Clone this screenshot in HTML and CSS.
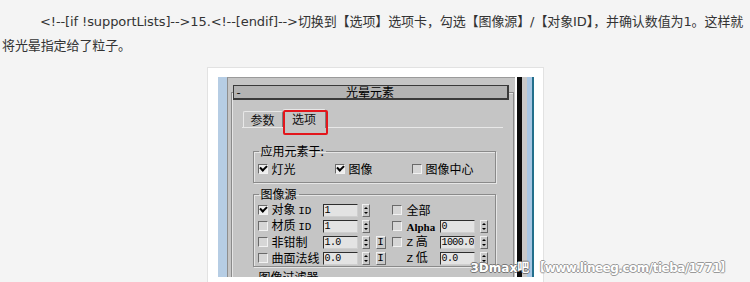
FILE: index.html
```html
<!DOCTYPE html>
<html lang="zh-CN">
<head>
  <meta charset="UTF-8">
  <title>光晕元素</title>
  <link rel="stylesheet" href="styles.css">
</head>
<body>
  <p class="step">&lt;!--[if !supportLists]--&gt;15.&lt;!--[endif]--&gt;切换到【选项】选项卡，勾选【图像源】/【对象ID】，并确认数值为1。这样就将光晕指定给了粒子。</p>

  <div class="figure">
    <div class="shot">
      <div class="edge-left"></div>
      <div class="panel">
        <div class="rollout">
          <div class="rollout-title"><span class="minus">-</span><span>光晕元素</span><span></span></div>

          <div class="tabs">
            <div class="tab">参数</div>
            <div class="tab active">选项<span class="mark"></span></div>
          </div>

          <fieldset class="group">
            <legend>应用元素于:</legend>
            <div class="apply-row">
              <label class="check"><span class="box on"></span>灯光</label>
              <label class="check"><span class="box on"></span>图像</label>
              <label class="check"><span class="box"></span>图像中心</label>
            </div>
          </fieldset>

          <fieldset class="group">
            <legend>图像源</legend>
            <div class="source-grid">
              <span class="box on"></span><span class="lbl">对象 <b class="mono">ID</b></span><span class="field">1</span><span class="spin"></span><span></span>
              <span class="box"></span><span class="lbl">全部</span><span></span><span></span>

              <span class="box"></span><span class="lbl">材质 <b class="mono">ID</b></span><span class="field">1</span><span class="spin"></span><span></span>
              <span class="box"></span><span class="lbl"><b class="serif">Alpha</b></span><span class="field">0</span><span class="spin"></span>

              <span class="box"></span><span class="lbl">非钳制</span><span class="field">1.0</span><span class="spin"></span><span class="btn-i">I</span>
              <span class="box"></span><span class="lbl"><b class="mono">Z</b> 高</span><span class="field">1000.0</span><span class="spin"></span>

              <span class="box"></span><span class="lbl">曲面法线</span><span class="field">0.0</span><span class="spin"></span><span class="btn-i">I</span>
              <span></span><span class="lbl"><b class="mono">Z</b> 低</span><span class="field">0.0</span><span class="spin"></span>
            </div>
          </fieldset>

          <div class="next-group">图像过滤器</div>
        </div>
      </div>
      <div class="edge-dark"></div>
      <div class="edge-gray"></div>
      <div class="edge-blue"></div>
      <div class="edge-teal"></div>
    </div>

    <div class="watermark"><span class="wm-site">3Dmax吧</span><span class="wm-url">【www.lineeg.com/tieba/1771】</span></div>
  </div>
</body>
</html>
```

FILE: styles.css
```css
body {
  margin: 0;
  background: #f4f4f4;
  font-family: "DejaVu Sans", "Noto Sans CJK SC", sans-serif;
  color: #333;
}

.step {
  margin: 0;
  height: 67px;
  box-sizing: border-box;
  padding: 10px 2px 0 2px;
  font-size: 13px;
  line-height: 24px;
  letter-spacing: -0.1px;
  text-indent: 38px;
}

.figure {
  position: relative;
  width: 316px;
  margin: 0 auto;
  padding: 9px 9px 9px 10px;
  border: 1px solid #e2e2e2;
  background: #fff;
}

.shot {
  display: flex;
  height: 200px;
  overflow: hidden;
  font-family: "Noto Sans CJK SC", sans-serif;
  font-size: 12px;
  line-height: 14px;
  color: #000;
}

.edge-left {
  flex: none;
  width: 9px;
  background: #b6cde4;
}

.panel {
  flex: none;
  width: 288px;
  box-sizing: border-box;
  padding: 14px 1px 0 3px;
  background: #c5c5c5;
  border-left: 1px solid #8e8e8e;
  border-top: 1px solid #9a9a9a;
}

.edge-dark { flex: none; width: 5px; margin-left: 2px; background: #0c0c0c; }
.edge-gray { flex: none; width: 5px; background: #c9c9c9; }
.edge-blue { flex: none; width: 5px; background: #a9c7e4; }
.edge-teal { flex: none; width: 2px; background: #236f8c; }

.rollout {
  border: 1px solid #8a8a8a;
  box-shadow: inset 1px 1px 0 #e6e6e6;
  height: 300px;
}

.rollout-title {
  display: grid;
  grid-template-columns: 12px 1fr 12px;
  height: 15px;
  box-sizing: border-box;
  margin: -8px 4px 0 1px;
  background: #b3b3b3;
  border: 1px solid #3a3a3a;
  border-right-width: 2px;
  border-bottom-width: 2px;
  line-height: 12px;
  text-align: center;
}

.minus {
  text-align: left;
  padding-left: 3px;
}

.tabs {
  display: flex;
  align-items: flex-end;
  height: 18px;
  margin: 9px 10px 0 10px;
  padding-left: 1px;
  border-bottom: 1px solid #e8e8e8;
}

.tab {
  position: relative;
  width: 40px;
  height: 16px;
  box-sizing: border-box;
  border: 1px solid #e8e8e8;
  border-bottom: none;
  border-right: 1px solid #7c7c7c;
  border-radius: 2px 2px 0 0;
  text-align: center;
  line-height: 15px;
  color: #111;
}

.tab.active {
  width: 43px;
  height: 19px;
  margin-bottom: -1px;
  background: #c5c5c5;
  line-height: 17px;
}

.mark {
  position: absolute;
  left: -1px;
  top: 0;
  width: 45px;
  height: 25px;
  box-sizing: border-box;
  border: 2px solid #e3161c;
  border-radius: 2px;
}

.group {
  width: 243px;
  box-sizing: border-box;
  margin: 16px 0 0 21px;
  padding: 4px 4px 6px;
  border: 1px solid #8a8a8a;
  box-shadow: inset 1px 1px 0 #e6e6e6, 1px 1px 0 #e6e6e6;
}

.group + .group {
  margin-top: 4px;
  padding: 1px 4px 0;
}

.group legend {
  padding: 0 2px;
  margin-left: 1px;
  line-height: 14px;
}

.apply-row {
  display: grid;
  grid-template-columns: 77px 77px auto;
}

.check {
  display: flex;
  align-items: center;
  gap: 4px;
}

.box {
  display: inline-block;
  position: relative;
  width: 10px;
  height: 10px;
  box-sizing: border-box;
  border: 1px solid;
  border-color: #6a6a6a #f2f2f2 #f2f2f2 #6a6a6a;
  background: #d6d6d6;
}

.box.on {
  background: #eeeeee;
}

.box.on::after {
  content: "";
  position: absolute;
  left: 1px;
  top: 0;
  width: 5px;
  height: 3px;
  border-left: 2px solid #000;
  border-bottom: 2px solid #000;
  transform: rotate(-45deg);
}

.source-grid {
  display: grid;
  grid-template-columns: 14px 51px 39px 14px 16px 15px 33px 40px 8px;
  grid-auto-rows: 16px;
  align-items: center;
}

.lbl {
  white-space: nowrap;
}

.mono {
  font-family: "Liberation Mono", monospace;
  font-weight: normal;
  font-size: 11px;
}

.serif {
  font-family: "Liberation Serif", serif;
  font-weight: bold;
  font-size: 11px;
}

.field {
  width: 35px;
  height: 13px;
  box-sizing: border-box;
  padding-left: 1px;
  border: 1px solid;
  border-color: #2e2e2e #cfcfcf #cfcfcf #2e2e2e;
  background: #e3e3e3;
  font-family: "Liberation Mono", monospace;
  font-size: 10px;
  letter-spacing: -0.6px;
  line-height: 11px;
  white-space: nowrap;
  overflow: hidden;
}

.spin {
  position: relative;
  width: 8px;
  height: 13px;
  box-sizing: border-box;
  border: 1px solid;
  border-color: #f0f0f0 #6a6a6a #6a6a6a #f0f0f0;
  background: #c9c9c9;
}

.spin::before,
.spin::after {
  content: "";
  position: absolute;
  left: 1px;
  border-left: 2px solid transparent;
  border-right: 2px solid transparent;
}

.spin::before {
  top: 2px;
  border-bottom: 2px solid #000;
}

.spin::after {
  bottom: 2px;
  border-top: 2px solid #000;
}

.btn-i {
  width: 10px;
  height: 13px;
  box-sizing: border-box;
  border: 1px solid;
  border-color: #f0f0f0 #6a6a6a #6a6a6a #f0f0f0;
  background: #c9c9c9;
  font-family: "Liberation Mono", monospace;
  font-size: 11px;
  line-height: 11px;
  text-align: center;
}

.next-group {
  margin: 3px 0 0 27px;
}

.watermark {
  position: absolute;
  left: 263px;
  top: 193px;
  display: flex;
  white-space: nowrap;
  color: #fff;
  font-family: "DejaVu Sans", "Noto Sans CJK SC", sans-serif;
  font-weight: bold;
  font-size: 12px;
  line-height: 14px;
  text-shadow: 1px 0 0 #777, -1px 0 0 #777, 0 1px 0 #777, 0 -1px 0 #777;
}

.wm-url {
  margin-left: 4px;
  letter-spacing: -0.5px;
  text-shadow: 1px 0 0 #999, -1px 0 0 #999, 0 1px 0 #999, 0 -1px 0 #999;
}
```
